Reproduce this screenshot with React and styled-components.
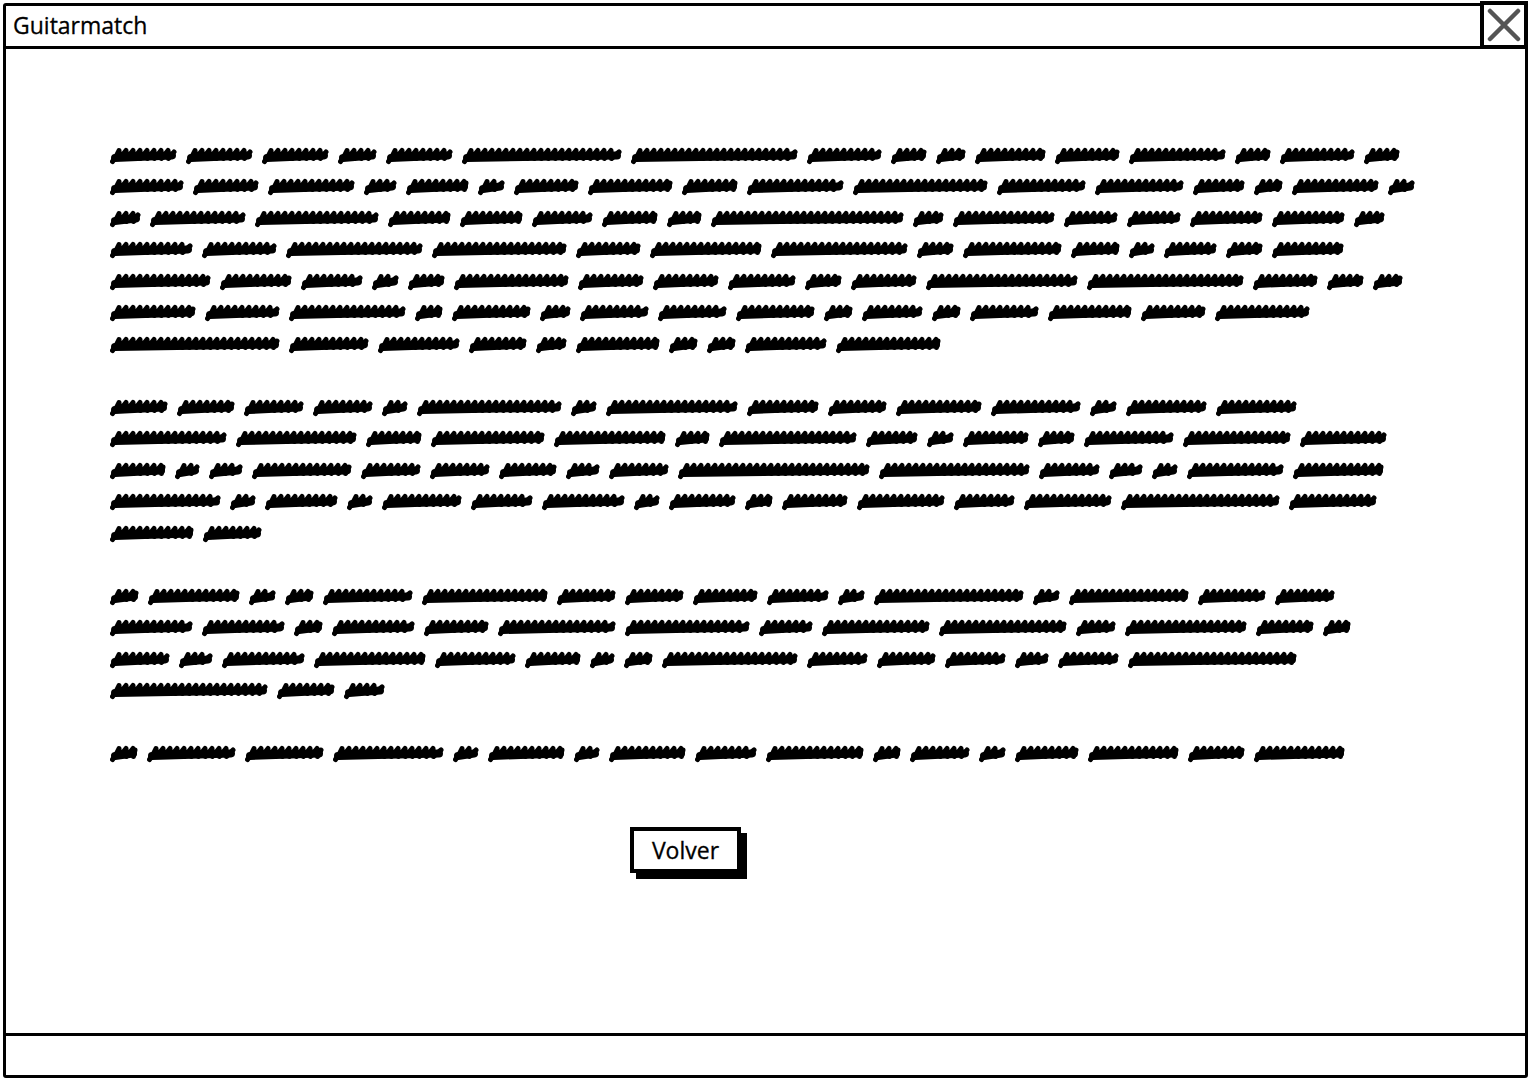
import React from 'react';
import styled, { createGlobalStyle } from 'styled-components';

const GlobalStyle = createGlobalStyle`
  html, body {
    margin: 0;
    padding: 0;
    background: #fff;
    font-family: "Open Sans", "Noto Sans", Arial, sans-serif;
  }
`;

const TEXT_LEFT = 110;
const WORD_GAP = 9;

// word widths (px, roughly) per line, plus where the line ends on screen
const paragraphs = [
  [
    { end: 1403, words: [63, 63, 63, 36, 63, 149, 156, 70, 34, 28, 66, 61, 91, 34, 70, 34] },
    { end: 1415, words: [76, 68, 89, 34, 64, 28, 66, 87, 57, 99, 138, 91, 91, 53, 30, 89, 28] },
    { end: 1385, words: [28, 87, 112, 57, 57, 55, 51, 32, 175, 28, 92, 49, 49, 66, 66, 28] },
    { end: 1345, words: [76, 68, 125, 123, 59, 102, 125, 34, 90, 45, 24, 48, 34, 66] },
    { end: 1403, words: [93, 66, 57, 25, 34, 106, 61, 61, 63, 34, 61, 140, 145, 60, 34, 28] },
    { end: 1308, words: [78, 68, 106, 25, 72, 28, 63, 63, 72, 26, 55, 26, 63, 76, 59, 86] },
    { end: 940, words: [149, 70, 72, 51, 27, 74, 25, 25, 72, 92] },
  ],
  [
    { end: 1300, words: [55, 55, 57, 57, 25, 137, 25, 125, 68, 56, 81, 85, 26, 77, 77] },
    { end: 1387, words: [114, 118, 55, 111, 109, 34, 135, 51, 26, 64, 36, 88, 105, 85] },
    { end: 1383, words: [55, 25, 34, 99, 59, 59, 57, 34, 59, 190, 150, 60, 34, 26, 96, 90] },
    { end: 1377, words: [105, 25, 69, 25, 76, 59, 78, 25, 63, 26, 62, 83, 58, 83, 150, 83] },
    { end: 262, words: [82, 57] },
  ],
  [
    { end: 1333, words: [27, 86, 25, 27, 84, 118, 55, 55, 61, 58, 25, 140, 25, 112, 64, 56] },
    { end: 1352, words: [78, 78, 27, 78, 61, 111, 118, 51, 102, 120, 38, 115, 55, 26] },
    { end: 1298, words: [59, 34, 82, 111, 80, 55, 25, 29, 134, 60, 58, 60, 34, 60, 167] },
    { end: 385, words: [154, 57, 40] },
  ],
  [
    { end: 1347, words: [27, 86, 76, 107, 25, 74, 25, 74, 60, 94, 27, 58, 26, 62, 88, 55, 88] },
  ],
];

const Window = styled.div`
  box-sizing: border-box;
  margin: 3px 0 0 3px;
  width: 1525px;
  height: 1075px;
  border: 3px solid #000;
  border-radius: 3px;
  display: flex;
  flex-direction: column;
  background: #fff;
`;

const TitleBar = styled.div`
  height: 40px;
  border-bottom: 3px solid #000;
  display: flex;
  align-items: center;
  justify-content: space-between;
`;

const Title = styled.div`
  padding-left: 7px;
  font-size: 23px;
  color: #000;
  line-height: 1;
  margin-top: -2px;
  -webkit-text-stroke: 0.3px #000;
`;

const CloseBox = styled.div`
  box-sizing: border-box;
  width: 48px;
  height: 48px;
  margin: -5px -3px -3px 0;
  border: 4px solid #000;
  display: flex;
  align-items: center;
  justify-content: center;
  background: #fff;
`;

const Body = styled.div`
  flex: 1;
  padding: 90px 0 0 ${TEXT_LEFT - 6}px;
`;

const Paragraph = styled.div`
  margin-bottom: 31.5px;
`;

const Line = styled.div`
  height: 31.5px;
  display: flex;
  align-items: center;
  gap: ${WORD_GAP}px;
`;

const ButtonWrap = styled.div`
  padding: 26px 0 0 ${630 - TEXT_LEFT}px;
`;

const Button = styled.div`
  box-sizing: border-box;
  width: 111px;
  height: 46px;
  border: 4px solid #000;
  box-shadow: 6px 6px 0 #000;
  display: flex;
  align-items: center;
  justify-content: center;
  font-size: 23px;
  color: #000;
  background: #fff;
  -webkit-text-stroke: 0.3px #000;
`;

const StatusBar = styled.div`
  height: 39px;
  border-top: 3px solid #000;
`;

// loopy cursive-like stroke standing in for redacted words
function scribblePath(w) {
  let d = 'M2.5 15 L6 10';
  let x = 4;
  while (x < w - 9) {
    d += ` L${(x + 5).toFixed(1)} 4 L${(x + 5.5).toFixed(1)} 12`;
    x += 7;
  }
  d += ` L${(w - 3).toFixed(1)} 5.5`;
  return d;
}

function Word({ w }) {
  return (
    <svg width={w} height="20" viewBox={`0 0 ${w} 20`}>
      <path d={`M5 13 L ${w - 5} 10.5`} stroke="#000" strokeWidth="8" strokeLinecap="round" fill="none" />
      <path d={scribblePath(w)} stroke="#000" strokeWidth="5" strokeLinejoin="round" strokeLinecap="round" fill="none" transform="translate(0 1.5)" />
    </svg>
  );
}

function ScribbleLine({ end, words }) {
  const sum = words.reduce((a, b) => a + b, 0);
  const space = end - TEXT_LEFT - (words.length - 1) * WORD_GAP;
  const k = space / sum;
  return (
    <Line>
      {words.map((w, i) => (
        <Word key={i} w={Math.round(w * k)} />
      ))}
    </Line>
  );
}

export default function App() {
  return (
    <>
      <GlobalStyle />
      <Window>
        <TitleBar>
          <Title>Guitarmatch</Title>
          <CloseBox>
            <svg width="34" height="34" viewBox="0 0 34 34">
              <path d="M3 3 L31 31 M31 3 L3 31" stroke="#555" strokeWidth="4.5" strokeLinecap="round" />
            </svg>
          </CloseBox>
        </TitleBar>
        <Body>
          {paragraphs.map((p, i) => (
            <Paragraph key={i}>
              {p.map((l, j) => (
                <ScribbleLine key={j} end={l.end} words={l.words} />
              ))}
            </Paragraph>
          ))}
          <ButtonWrap>
            <Button>Volver</Button>
          </ButtonWrap>
        </Body>
        <StatusBar />
      </Window>
    </>
  );
}
